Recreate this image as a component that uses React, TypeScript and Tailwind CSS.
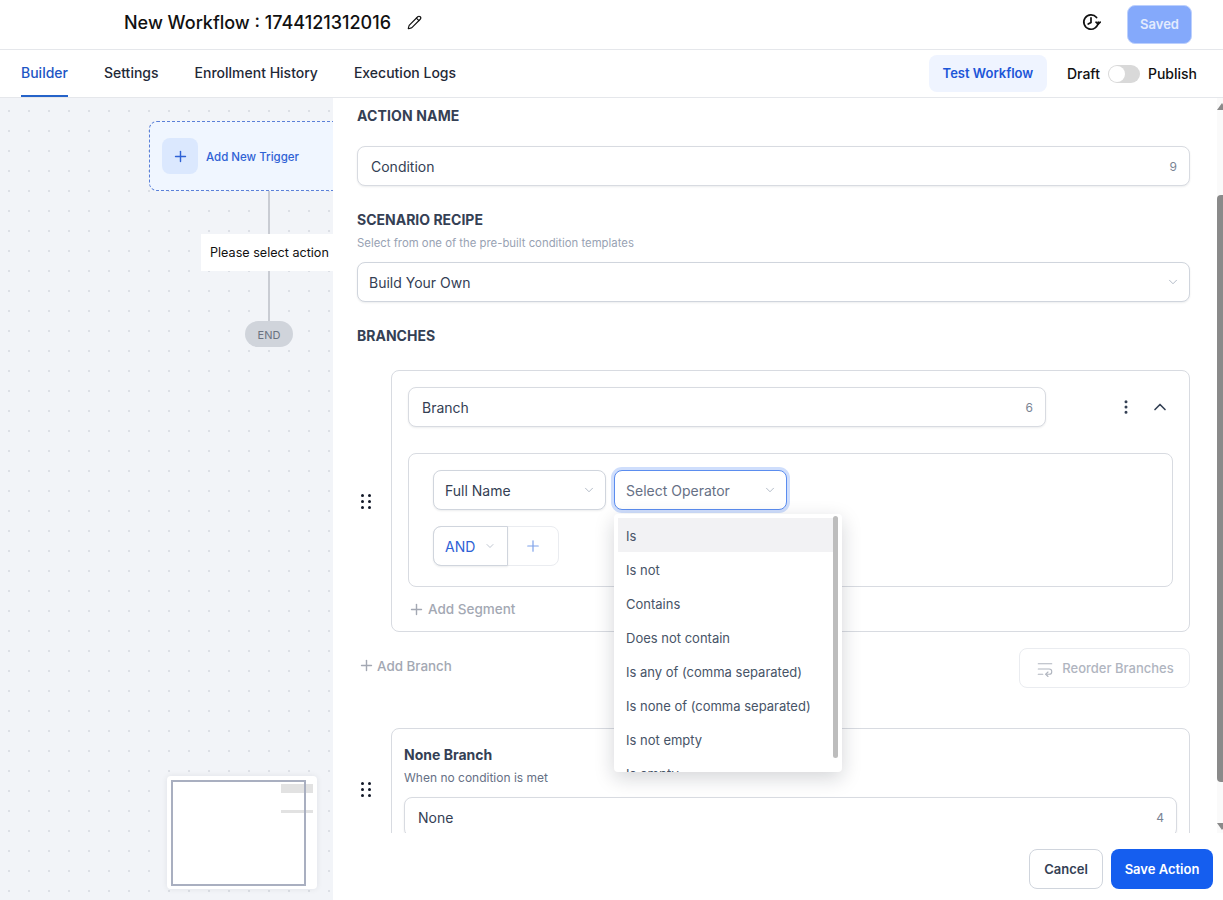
import { ChevronDown, ChevronUp, EllipsisVertical, Pencil, Plus, WrapText } from "lucide-react";

const operators = [
  "Is",
  "Is not",
  "Contains",
  "Does not contain",
  "Is any of (comma separated)",
  "Is none of (comma separated)",
  "Is not empty",
  "Is empty",
];

const tabs = ["Builder", "Settings", "Enrollment History", "Execution Logs"];

const Grip = () => (
  <div className="grid grid-cols-2 gap-x-[4px] gap-y-[3px] w-[10px]">
    {[0, 1, 2, 3, 4, 5].map((i) => (
      <div key={i} className="w-[3px] h-[3px] rounded-full bg-[#111827]" />
    ))}
  </div>
);

const CountInput = ({ value, className }: any) => (
  <div
    className={`h-10 flex items-center justify-between pl-[13px] pr-[12px] pt-[1px] bg-white border border-[#d8dbe1] rounded-lg shadow-[0_1px_2px_rgba(16,24,40,0.08)] ${className}`}
  >
    <span className="text-sm text-[#344054]">{value}</span>
    <span className="text-xs text-[#7a8494]">{value.length}</span>
  </div>
);

const SelectBox = ({ label, className, textColor }: any) => (
  <div
    className={`h-10 flex items-center justify-between pl-[11px] pr-[9px] bg-white border border-[#d0d5dd] rounded-lg ${className}`}
  >
    <span className={`text-sm pt-[1px] ${textColor || "text-[#344054]"}`}>{label}</span>
    <ChevronDown size={14} strokeWidth={1.25} className="text-[#98a2b3]" />
  </div>
);

const Header = () => (
  <div className="h-[50px] shrink-0 flex items-center justify-between border-b border-[#e5e7eb] pl-[124px] pr-[31px]">
    <div className="flex items-center gap-[16px] -mt-[4px]">
      <div className="text-[18px] font-medium text-[#111111] leading-none">
        New Workflow : 1744121312016
      </div>
      <Pencil size={15} strokeWidth={1.8} className="text-[#111111]" />
    </div>
    <div className="flex items-center gap-[26px]">
      <svg className="-mt-[5px]" width="20" height="20" viewBox="0 0 20 20" fill="none" stroke="#111111" strokeWidth="1.7" strokeLinecap="round" strokeLinejoin="round">
        <path d="M17.2 10.2a7.2 7.2 0 1 1-1.6-4.7" />
        <path d="M10 5.8v4.6l-2.8 1.6" />
        <path d="M15 10.2l2.2 2 2-2" />
      </svg>
      <div className="w-[65px] h-[39px] flex items-center justify-center rounded-lg bg-[#84a9fb] border border-[#bcd0fd] text-[13px] font-semibold text-[#e3ebfe]">
        Saved
      </div>
    </div>
  </div>
);

const Tabs = () => (
  <div className="h-[48px] shrink-0 flex items-center justify-between border-b border-[#e5e7eb] pl-[21px] pr-[26px]">
    <div className="flex gap-[36px] h-full">
      {tabs.map((tab, i) => (
        <div
          key={tab}
          className={`h-full flex items-center text-sm font-medium border-b-2 ${
            i === 0 ? "text-[#1d56c5] border-[#2563c9]" : "text-[#1f2937] border-transparent"
          }`}
        >
          {tab}
        </div>
      ))}
    </div>
    <div className="flex items-center">
      <div className="w-[118px] h-[37px] pt-[1px] flex items-center justify-center rounded-lg bg-[#eff4ff] text-[13px] font-semibold text-[#1d56d8]">
        Test Workflow
      </div>
      <span className="ml-[20px] text-sm font-medium text-[#111111]">Draft</span>
      <div className="ml-[8px] w-[32px] h-[18px] rounded-full bg-[#d9d9d9] flex items-center px-[1px]">
        <div className="w-[16px] h-[16px] rounded-full bg-white" />
      </div>
      <span className="ml-[8px] text-sm font-medium text-[#111111]">Publish</span>
    </div>
  </div>
);

const Canvas = () => (
  <div className="relative w-[333px] shrink-0 overflow-hidden bg-[#f2f4f8] bg-[radial-gradient(#dcdfe5_1.1px,transparent_1.3px)] bg-[length:20px_20px] bg-[position:-1px_3px]">
    <div className="absolute left-[149px] top-[23px] w-[220px] h-[70px] flex items-center pl-[12px] gap-[8px] rounded-lg border border-dashed border-[#5b80d8] bg-[#f0f6ff]">
      <div className="w-[36px] h-[36px] flex items-center justify-center rounded-lg bg-[#dbe8fe]">
        <Plus size={17} strokeWidth={2} className="text-[#2f62d5]" />
      </div>
      <span className="text-[11.5px] font-medium pt-[4px] text-[#2f62d5]">Add New Trigger</span>
    </div>
    <div className="absolute left-[268px] top-[93px] w-[2px] h-[43px] bg-[#c9ccd3]" />
    <div className="absolute left-[201px] top-[136px] w-[140px] h-[37px] flex items-center pl-[9px] pt-[1px] bg-white text-[12.6px] whitespace-nowrap text-[#111111]">
      Please select action
    </div>
    <div className="absolute left-[268px] top-[173px] w-[2px] h-[50px] bg-[#c9ccd3]" />
    <div className="absolute left-[245px] top-[223px] w-[48px] h-[26px] flex items-center justify-center pt-[2px] rounded-full bg-[#d0d4db] text-[11px] text-[#6b7280]">
      END
    </div>
    <div className="absolute left-[167px] top-[678px] w-[150px] h-[113px] bg-white rounded shadow-[0_0_6px_rgba(16,24,40,0.08)]">
      <div className="absolute left-[114px] top-[8px] w-[32px] h-[9px] bg-[#e2e2e2]" />
      <div className="absolute left-[114px] top-[34px] w-[32px] h-[3px] bg-[#e2e2e2]" />
      <div className="absolute left-[4px] top-[4px] w-[135px] h-[106px] border-2 border-[#a9afc0]" />
    </div>
  </div>
);

const OperatorMenu = () => (
  <div className="absolute left-[281px] top-[416px] w-[228px] h-[258px] overflow-hidden bg-white rounded shadow-[0_6px_20px_rgba(16,24,40,0.18)] z-10">
    <div className="pt-[4px] px-[4px]">
      {operators.map((op, i) => (
        <div
          key={op}
          className={`h-[34px] flex items-center px-[8px] pt-[3px] text-[13px] text-[#475467] ${
            i === 0 ? "bg-[#f2f2f4]" : ""
          }`}
        >
          {op}
        </div>
      ))}
    </div>
    <div className="absolute right-[4px] top-[2px] w-[5px] h-[242px] rounded-full bg-[#bdbdbd]" />
  </div>
);

const BranchCard = () => (
  <div className="flex items-center">
    <div className="w-[34px] shrink-0 pl-[4px]">
      <Grip />
    </div>
    <div className="flex-1 h-[262px] border border-[#d8dbe1] rounded-lg px-[16px] pt-[16px]">
      <div className="flex items-center">
        <CountInput value="Branch" className="w-[638px]" />
        <EllipsisVertical size={18} strokeWidth={2} className="ml-[71px] text-[#344054]" />
        <ChevronUp size={20} strokeWidth={2} className="ml-[15px] text-[#344054]" />
      </div>
      <div className="mt-[26px] h-[134px] border border-[#d8dbe1] rounded-lg pl-[24px] pt-[16px]">
        <div className="flex gap-[8px]">
          <SelectBox label="Full Name" className="w-[173px] shadow-[0_1px_2px_rgba(16,24,40,0.08)]" />
          <SelectBox
            label="Select Operator"
            textColor="text-[#667085]"
            className="w-[173px] !border-[#5b8def] shadow-[0_0_0_3px_#cfdefc]"
          />
        </div>
        <div className="mt-[16px] w-[126px] h-10 flex rounded-lg border border-[#eaecf0]">
          <div className="w-[75px] flex items-center gap-[9px] pl-[11px] border border-[#d0d5dd] rounded-l-lg -m-px shadow-[0_1px_2px_rgba(16,24,40,0.08)]">
            <span className="text-sm pt-[1px] text-[#2f62d5]">AND</span>
            <ChevronDown size={12} strokeWidth={1.25} className="text-[#98a2b3]" />
          </div>
          <div className="flex-1 flex items-center justify-center">
            <Plus size={18} strokeWidth={1.6} className="text-[#7ea2ea]" />
          </div>
        </div>
      </div>
      <div className="mt-[12px] flex items-center gap-[3px] text-[13.5px] font-medium text-[#a3a8b3]">
        <Plus size={17} strokeWidth={2} />
        Add Segment
      </div>
    </div>
  </div>
);

const Scrollbar = () => (
  <div className="w-[6px] shrink-0 flex flex-col overflow-hidden bg-[#fafafa] pt-[5px] pb-[3px]">
    <div className="w-0 h-0 border-x-[5px] border-x-transparent border-b-[7px] border-b-[#8a8a8a]" />
    <div className="mt-[85px] w-full h-[587px] rounded-l-[4px] bg-[#8a8a8a]" />
    <div className="mt-auto w-0 h-0 border-x-[5px] border-x-transparent border-t-[7px] border-t-[#8a8a8a]" />
  </div>
);

const Panel = () => (
  <div className="relative flex-1 min-w-0 flex flex-col bg-white">
    <div className="h-[735px] shrink-0 flex overflow-hidden">
      <div className="flex-1 min-w-0 pl-[24px] pr-[27px] pt-[8px]">
        <div className="text-sm font-bold tracking-[0.01em] text-[#344054]">ACTION NAME</div>
        <CountInput value="Condition" className="mt-[20px]" />
        <div className="mt-[24px] text-sm font-bold text-[#344054]">SCENARIO RECIPE</div>
        <div className="mt-[5px] text-[11.35px] leading-4 text-[#98a2b3]">
          Select from one of the pre-built condition templates
        </div>
        <SelectBox label="Build Your Own" className="mt-[11px] shadow-[0_1px_2px_rgba(16,24,40,0.08)]" />
        <div className="mt-[24px] text-sm font-bold text-[#344054]">BRANCHES</div>
        <div className="mt-[24px]">
          <BranchCard />
        </div>
        <div className="mt-[16px] h-10 flex items-center justify-between">
          <div className="flex items-center gap-[2px] pl-[1px] -mt-[4px] text-[13.4px] font-medium text-[#a3a8b3]">
            <Plus size={17} strokeWidth={2} />
            Add Branch
          </div>
          <div className="w-[171px] h-10 flex items-center justify-center gap-[8px] pl-[1px] pt-[1px] rounded-lg border border-[#eaecf0] text-[13px] font-medium text-[#b0b5bf]">
            <WrapText size={18} strokeWidth={1.5} />
            Reorder Branches
          </div>
        </div>
        <div className="mt-[40px] flex">
          <div className="w-[34px] shrink-0 pl-[4px] pt-[54px]">
            <Grip />
          </div>
          <div className="flex-1 border border-[#d8dbe1] rounded-lg px-[12px] pt-[18px] h-[200px]">
            <div className="text-sm font-bold text-[#344054] leading-4">None Branch</div>
            <div className="mt-[7px] text-xs leading-4 text-[#667085]">When no condition is met</div>
            <CountInput value="None" className="mt-[11px]" />
          </div>
        </div>
      </div>
      <Scrollbar />
    </div>
    <div className="flex-1 flex items-start justify-end gap-[8px] pr-[10px] pt-[16px]">
      <div className="w-[74px] h-10 pt-[1px] flex items-center justify-center rounded-lg border border-[#d0d5dd] text-[13px] font-semibold text-[#344054]">
        Cancel
      </div>
      <div className="w-[102px] h-10 pt-[1px] flex items-center justify-center rounded-lg bg-[#155eef] text-[13px] font-semibold text-white">
        Save Action
      </div>
    </div>
    <OperatorMenu />
  </div>
);

const App = () => {
  return (
    <div className="w-[1223px] h-[900px] flex flex-col overflow-hidden bg-white font-[Inter,sans-serif]">
      <Header />
      <Tabs />
      <div className="flex-1 min-h-0 flex">
        <Canvas />
        <Panel />
      </div>
    </div>
  );
};

export default App;
